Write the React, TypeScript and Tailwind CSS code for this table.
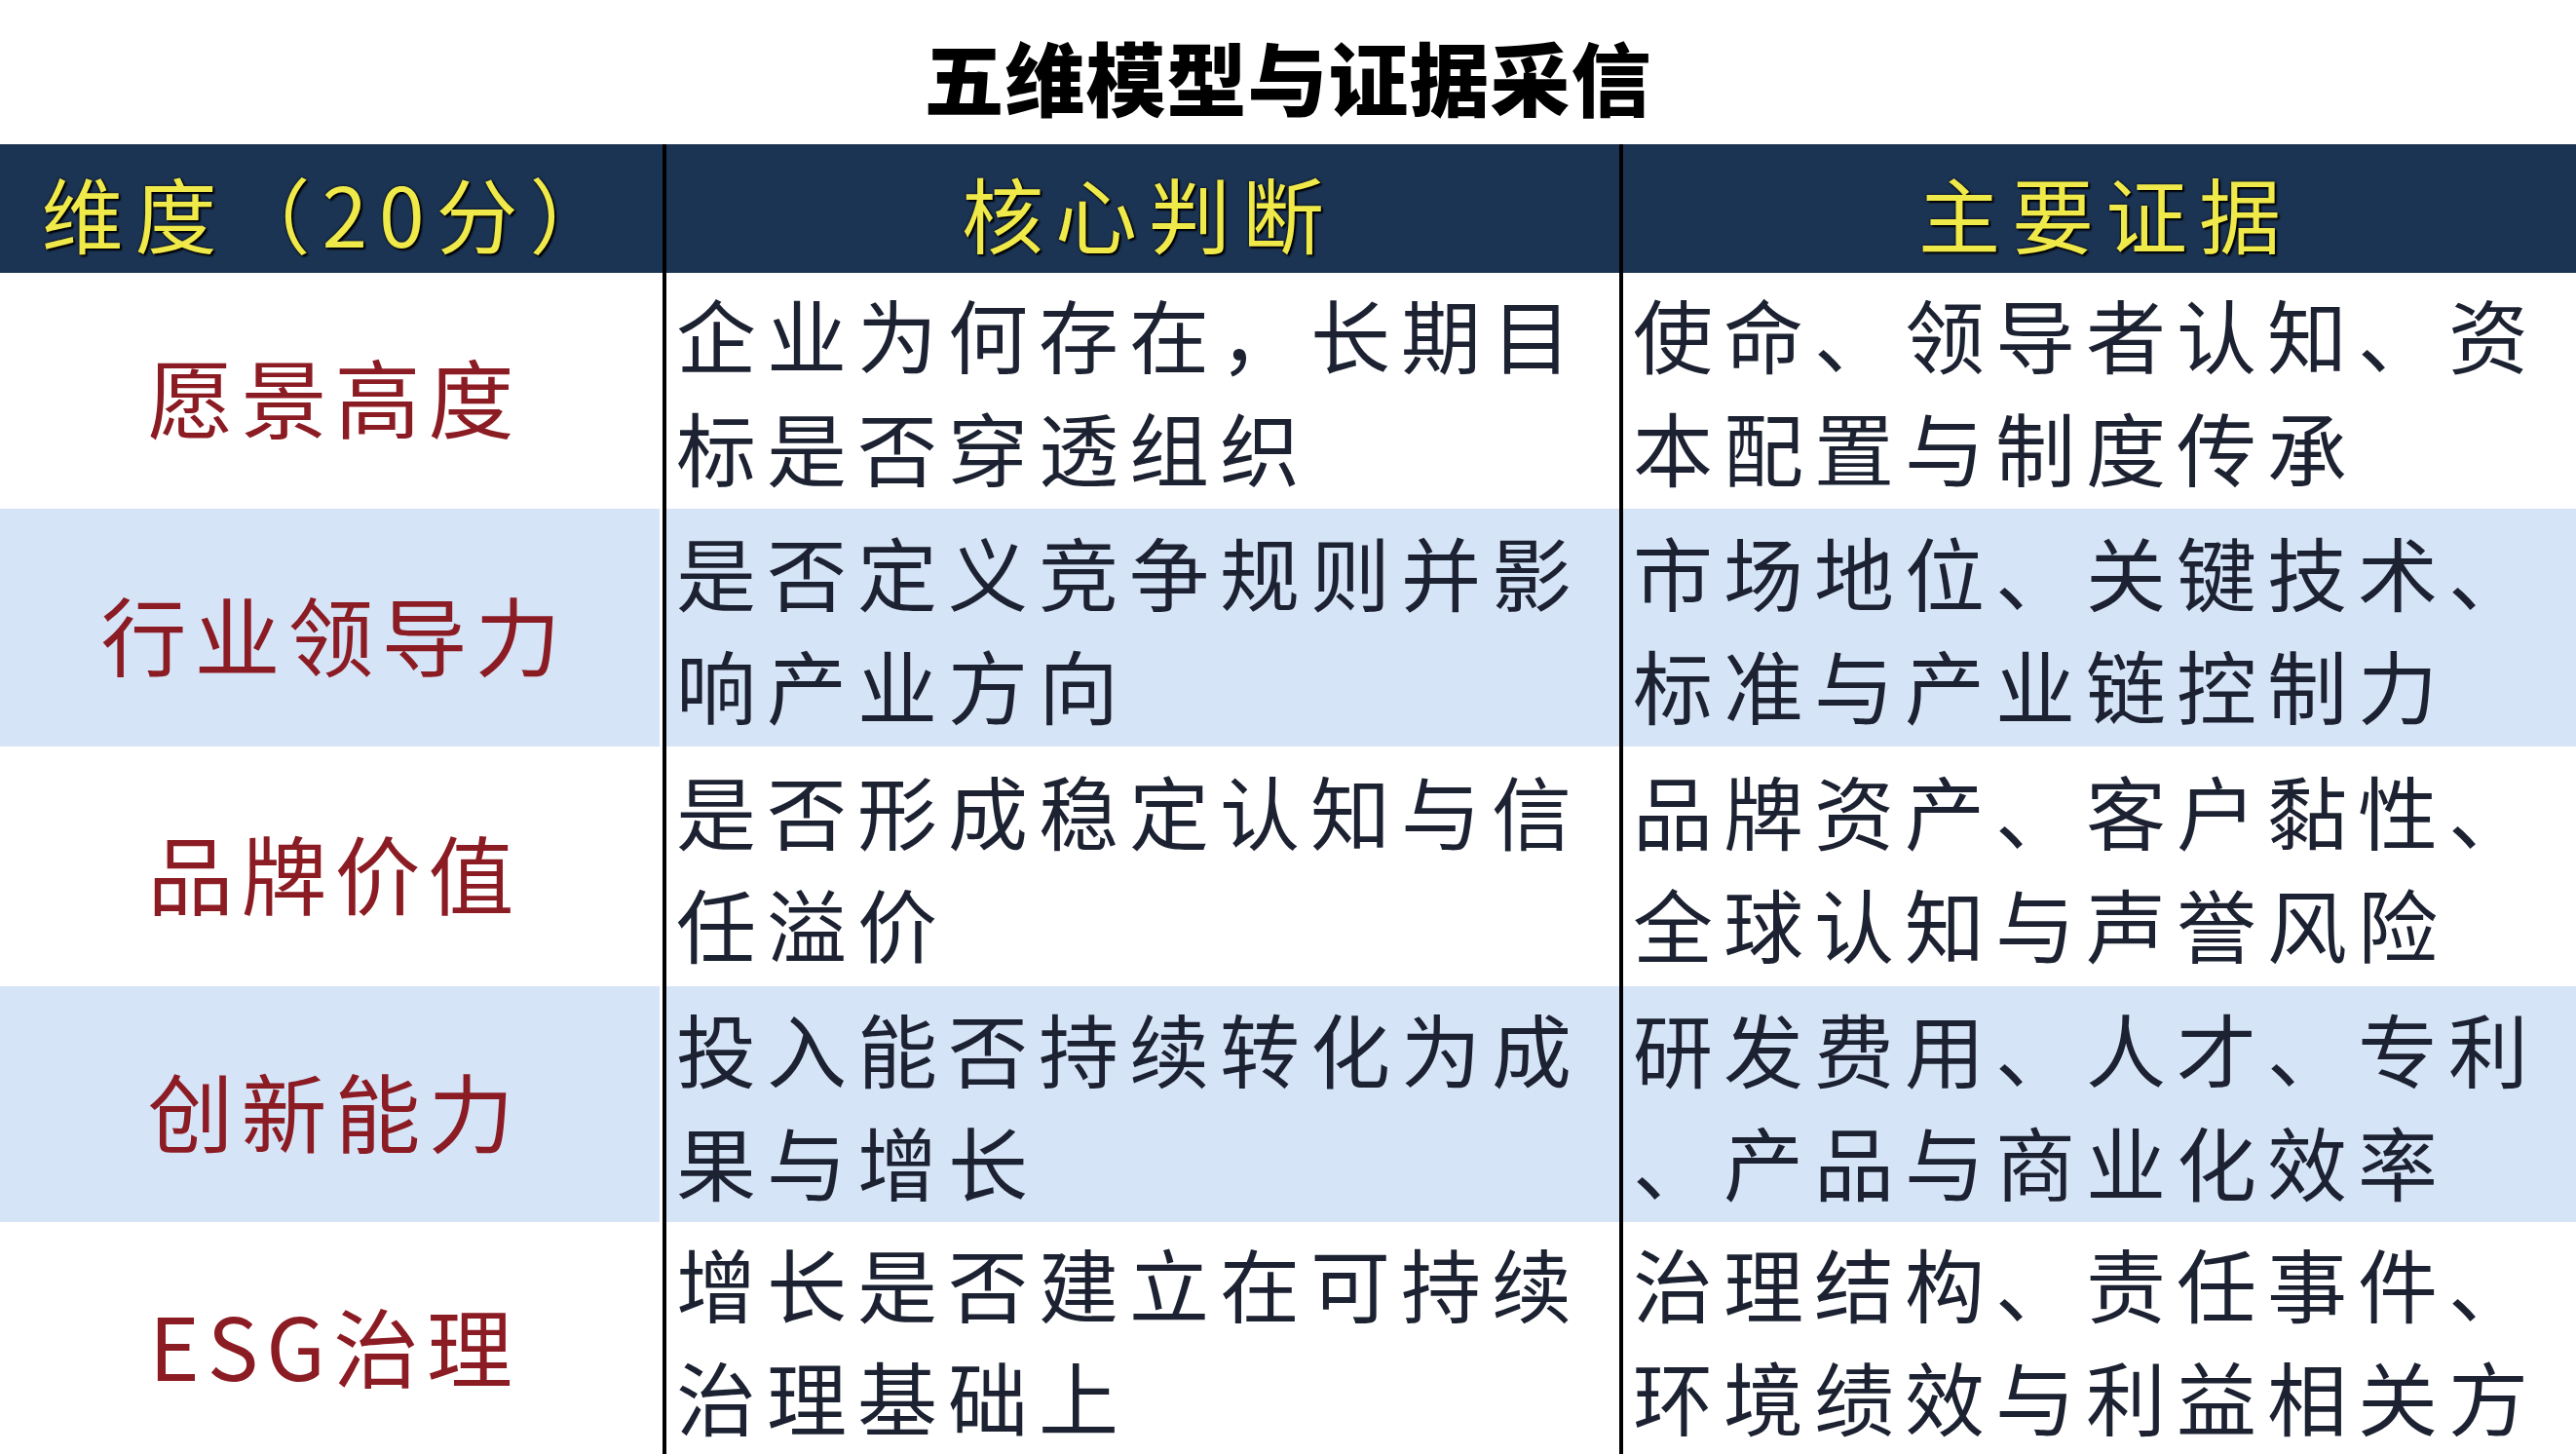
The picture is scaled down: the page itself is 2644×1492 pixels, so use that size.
import React from "react";

interface Row {
  name: string;
  judge: [string, string];
  evidence: [string, string];
  height: string;
  shaded: boolean;
}

const rows: Row[] = [
  {
    name: "愿景高度",
    judge: ["企业为何存在，长期目", "标是否穿透组织"],
    evidence: ["使命、领导者认知、资", "本配置与制度传承"],
    height: "h-[240px]",
    shaded: false,
  },
  {
    name: "行业领导力",
    judge: ["是否定义竞争规则并影", "响产业方向"],
    evidence: ["市场地位、关键技术、", "标准与产业链控制力"],
    height: "h-[248px]",
    shaded: true,
  },
  {
    name: "品牌价值",
    judge: ["是否形成稳定认知与信", "任溢价"],
    evidence: ["品牌资产、客户黏性、", "全球认知与声誉风险"],
    height: "h-[242px]",
    shaded: false,
  },
  {
    name: "创新能力",
    judge: ["投入能否持续转化为成", "果与增长"],
    evidence: ["研发费用、人才、专利", "、产品与商业化效率"],
    height: "h-[246px]",
    shaded: true,
  },
  {
    name: "ESG治理",
    judge: ["增长是否建立在可持续", "治理基础上"],
    evidence: ["治理结构、责任事件、", "环境绩效与利益相关方"],
    height: "h-[236px]",
    shaded: false,
  },
];

const font = "font-['Noto_Sans_CJK_SC','Noto_Sans',sans-serif]";

function TextCell({ lines, shaded }: { lines: [string, string]; shaded: boolean }) {
  return (
    <div className="h-full border-l-[4px] border-black pt-[2px] pb-[2px]">
      <div className={`flex h-full flex-col justify-center pl-[10px] ${shaded ? "bg-[#d6e4f8]" : "bg-white"}`}>
        {lines.map((line, i) => (
          <div
            key={i}
            className="whitespace-nowrap text-[82px] leading-[116px] tracking-[11px] text-[#1c2231]"
          >
            {line}
          </div>
        ))}
      </div>
    </div>
  );
}

export default function App() {
  return (
    <div className={`w-[2644px] h-[1492px] overflow-hidden bg-white ${font}`}>
      {/* Title */}
      <div className="flex h-[148px] items-center justify-center pt-[8px]">
        <h1 className="text-[82px] font-black leading-none text-black tracking-[1px]">
          五维模型与证据采信
        </h1>
      </div>

      {/* Header */}
      <div className="grid h-[132px] grid-cols-[680px_982px_1fr] bg-[#1c3453]">
        {["维度（20分）", "核心判断", "主要证据"].map((h, i) => (
          <div
            key={h}
            className={`flex items-center justify-center pt-[8px] ${i > 0 ? "border-l-[4px] border-black" : ""}`}
          >
            <span
              className={`text-[84px] font-normal leading-none tracking-[12px] text-[#efe94a] [text-shadow:0_0_3px_#000,2px_2px_2px_#000] ${i === 0 ? "pl-[2px]" : "pl-[12px]"}`}
            >
              {h}
            </span>
          </div>
        ))}
      </div>

      {/* Body */}
      {rows.map((r) => (
        <div key={r.name} className={`grid grid-cols-[680px_982px_1fr] ${r.height}`}>
          <div className="py-[2px] pr-[3px]">
            <div
              className={`flex h-full items-center justify-center ${r.shaded ? "bg-[#d6e4f8]" : "bg-white"}`}
            >
              <span className="pl-[10px] pt-[10px] text-[88px] font-normal leading-none tracking-[8px] text-[#8c1c23]">
                {r.name}
              </span>
            </div>
          </div>
          <TextCell lines={r.judge} shaded={r.shaded} />
          <TextCell lines={r.evidence} shaded={r.shaded} />
        </div>
      ))}
    </div>
  );
}
